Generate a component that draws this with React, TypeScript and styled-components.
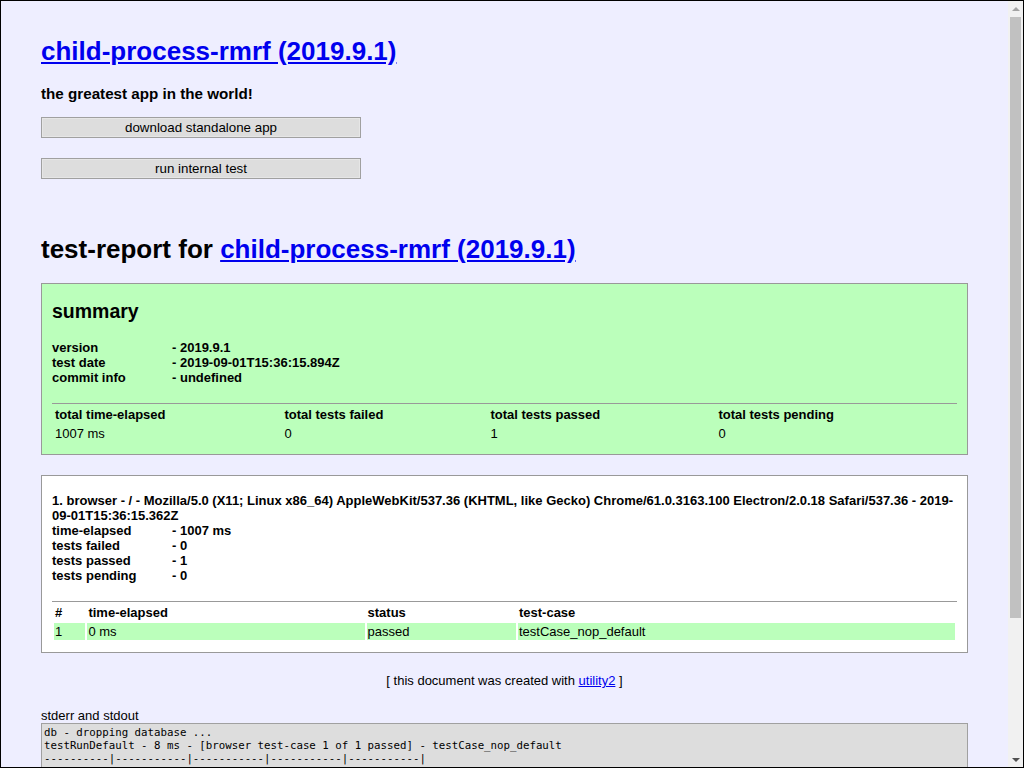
import React from 'react';
import styled, {createGlobalStyle} from 'styled-components';

const appName = 'child-process-rmrf (2019.9.1)'

const summaryStats = [
    ['version', '2019.9.1'],
    ['test date', '2019-09-01T15:36:15.894Z'],
    ['commit info', 'undefined'],
]

const summaryTotals = [
    ['total time-elapsed', '1007 ms'],
    ['total tests failed', '0'],
    ['total tests passed', '1'],
    ['total tests pending', '0'],
]

const platformTitle = '1. browser - / - Mozilla/5.0 (X11; Linux x86_64) AppleWebKit/537.36 (KHTML, like Gecko) Chrome/61.0.3163.100 Electron/2.0.18 Safari/537.36 - 2019-09-01T15:36:15.362Z'

const platformStats = [
    ['time-elapsed', '1007 ms'],
    ['tests failed', '0'],
    ['tests passed', '1'],
    ['tests pending', '0'],
]

const testCases = [
    {id: 1, timeElapsed: '0 ms', status: 'passed', name: 'testCase_nop_default'},
]

const logLines = [
    'db - dropping database ...',
    'testRunDefault - 8 ms - [browser test-case 1 of 1 passed] - testCase_nop_default',
    '----------|-----------|-----------|-----------|-----------|',
    'File      |   % Stmts |% Branches |   % Funcs |   % Lines |',
    '----------|-----------|-----------|-----------|-----------|',
    'All files |       100 |       100 |       100 |       100 |',
    ' lib.js   |       100 |       100 |       100 |       100 |',
    '----------|-----------|-----------|-----------|-----------|',
    '',
    'browser test-report - 1007 ms - 0 failed - 1 passed - 0 pending',
    'db - saving database ...',
    'coverage-report - created in .tmp/build/coverage.html',
    'test-report - created in .tmp/build/test-report.html',
    'exit-code 0',
]

const GlobalStyle = createGlobalStyle`
  html, body {
    margin: 0;
    height: 100%;
    overflow: hidden;
  }
  #root {
    height: 100%;
  }
`

// window frame: page viewport + old-style chrome scrollbar
const Window = styled.div`
  box-sizing: border-box;
  display: flex;
  height: 100vh;
  border: 1px solid #000;
  background: #eef;
  font-family: "Liberation Sans", Arial, sans-serif;
  font-size: 13px;
  line-height: 15px;
  color: #000;
`

const Viewport = styled.div`
  flex: 1;
  min-width: 0;
  overflow: hidden;
`

const ScrollRail = styled.div`
  width: 15px;
  flex: none;
  display: flex;
  flex-direction: column;
  background: #f1f1f1;
`

const ScrollArrow = styled.div<{ $dir: 'up' | 'down' }>`
  height: 15px;
  flex: none;
  display: flex;
  align-items: center;
  justify-content: center;

  &::before {
    content: '';
    width: 0;
    height: 0;
    border-left: 4px solid transparent;
    border-right: 4px solid transparent;
    ${p => p.$dir === 'up'
        ? 'border-bottom: 4px solid #a3a3a3;'
        : 'border-top: 4px solid #505050;'}
  }
`

const ScrollTrack = styled.div`
  flex: 1;
  padding: 1px 2px 0;
`

const ScrollThumb = styled.div`
  height: 601px;
  background: #c1c1c1;
`

const Page = styled.main`
  display: flow-root;
  padding: 0 40px 20px;
`

const Link = styled.a`
  color: #00e;
  text-decoration: underline;
`

const AppTitle = styled.h1`
  font-size: 26px;
  line-height: 30px;
  margin: 35px 0 19px;
`

const Tagline = styled.h3`
  font-size: 15.2px;
  line-height: 17.5px;
  margin: 0 0 14.5px;
`

const ButtonStack = styled.div`
  display: flex;
  flex-direction: column;
  gap: 20px;
`

const ActionButton = styled.button`
  box-sizing: border-box;
  width: 320px;
  height: 21px;
  padding: 0 6px;
  background: #ddd;
  border: 1px solid #a0a0a0;
  box-shadow: inset 0 0 0 1px #e6e6e6;
  font-family: "Liberation Sans", Arial, sans-serif;
  font-size: 13.33px;
  line-height: 15px;
  color: #000;
`

const ReportTitle = styled.h1`
  font-size: 26px;
  line-height: 30px;
  margin: 55px 0 19px;
`

const CardStack = styled.div`
  display: flex;
  flex-direction: column;
  gap: 20px;
`

const Card = styled.section<{ $tone: 'summary' | 'platform' }>`
  display: flow-root;
  border: 1px solid #999;
  padding: 0 10px 10px;
  background: ${p => p.$tone === 'summary' ? '#bfb' : '#fff'};
`

const SectionHeading = styled.h2`
  font-size: 19.5px;
  line-height: 22px;
  margin: 16px 0 18px;
`

const StatBlock = styled.div<{ $top: number }>`
  margin: ${p => p.$top}px 0 18px;
  font-weight: bold;
`

const StatRow = styled.div`
  display: flex;
`

const StatLabel = styled.span`
  width: 120px;
  flex: none;
`

const ResultTable = styled.table`
  width: 100%;
  border-top: 1px solid #999;
  border-spacing: 2px;
  text-align: left;
  font-size: 13px;
  line-height: 15px;

  th, td {
    padding: 1px;
  }
  th {
    font-weight: bold;
  }
`

const ResultRow = styled.tr`
  &:nth-child(odd) {
    background: #bfb;
  }
`

const Footer = styled.div`
  margin-top: 20px;
  text-align: center;
`

const LogLabel = styled.div`
  margin-top: 20px;
`

const LogBox = styled.pre`
  margin: 0;
  padding: 2px;
  border: 1px solid #a0a0a0;
  background: #ddd;
  font-family: "DejaVu Sans Mono", monospace;
  font-size: 10.75px;
  line-height: normal;
  color: #000;
  white-space: pre;
  overflow: hidden;
`

const Stats: React.FC<{ rows: string[][]; top: number; title?: string }> = ({rows, top, title}) => (
    <StatBlock $top={top}>
        {title && <div>{title}</div>}
        {rows.map(([label, value]) => (
            <StatRow key={label}>
                <StatLabel>{label}</StatLabel>
                <span>- {value}</span>
            </StatRow>
        ))}
    </StatBlock>
)

const App: React.FC = () => {
    const renderSummary = () => (
        <Card $tone="summary">
            <SectionHeading>summary</SectionHeading>
            <Stats rows={summaryStats} top={0}/>
            <ResultTable>
                <thead>
                <tr>
                    {summaryTotals.map(([label]) => <th key={label}>{label}</th>)}
                </tr>
                </thead>
                <tbody>
                <ResultRow>
                    {summaryTotals.map(([label, value]) => <td key={label}>{value}</td>)}
                </ResultRow>
                </tbody>
            </ResultTable>
        </Card>
    )

    const renderPlatform = () => (
        <Card $tone="platform">
            <Stats rows={platformStats} top={17} title={platformTitle}/>
            <ResultTable>
                <thead>
                <tr>
                    <th>#</th>
                    <th>time-elapsed</th>
                    <th>status</th>
                    <th>test-case</th>
                </tr>
                </thead>
                <tbody>
                {testCases.map(tc => (
                    <ResultRow key={tc.id}>
                        <td>{tc.id}</td>
                        <td>{tc.timeElapsed}</td>
                        <td>{tc.status}</td>
                        <td>{tc.name}</td>
                    </ResultRow>
                ))}
                </tbody>
            </ResultTable>
        </Card>
    )

    return (
        <>
            <GlobalStyle/>
            <Window>
                <Viewport>
                    <Page>
                        <AppTitle><Link href="#">{appName}</Link></AppTitle>
                        <Tagline>the greatest app in the world!</Tagline>
                        <ButtonStack>
                            <ActionButton>download standalone app</ActionButton>
                            <ActionButton>run internal test</ActionButton>
                        </ButtonStack>

                        <ReportTitle>test-report for <Link href="#">{appName}</Link></ReportTitle>
                        <CardStack>
                            {renderSummary()}
                            {renderPlatform()}
                        </CardStack>
                        <Footer>[ this document was created with <Link href="#">utility2</Link> ]</Footer>

                        <LogLabel>stderr and stdout</LogLabel>
                        <LogBox>{logLines.join('\n')}</LogBox>
                    </Page>
                </Viewport>
                <ScrollRail>
                    <ScrollArrow $dir="up"/>
                    <ScrollTrack>
                        <ScrollThumb/>
                    </ScrollTrack>
                    <ScrollArrow $dir="down"/>
                </ScrollRail>
            </Window>
        </>
    );
};

export default App;
